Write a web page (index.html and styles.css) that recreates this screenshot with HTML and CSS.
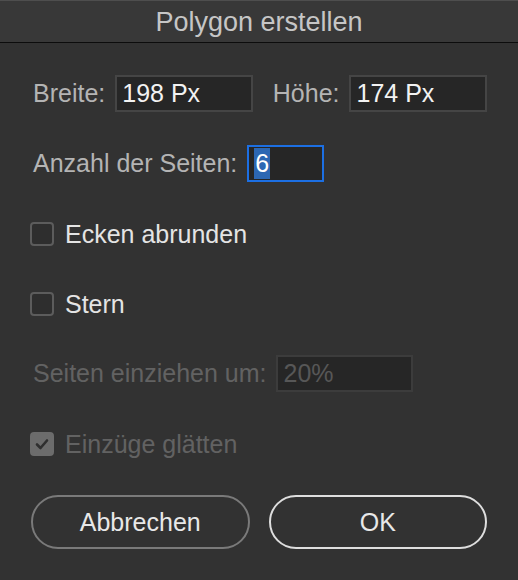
FILE: index.html
```html
<!DOCTYPE html>
<html lang="de">
<head>
    <meta charset="UTF-8">
    <meta name="viewport" content="width=device-width, initial-scale=1.0">
    <title>Polygon erstellen</title>
    <link rel="stylesheet" href="styles.css">
</head>
<body>
    <div class="dialog">
        <div class="titlebar">Polygon erstellen</div>

        <div class="content">
            <div class="row row-size">
                <label class="label">Breite:</label>
                <div class="field field-size">198 Px</div>
                <label class="label label-height">Höhe:</label>
                <div class="field field-size">174 Px</div>
            </div>

            <div class="row row-sides">
                <label class="label">Anzahl der Seiten:</label>
                <div class="field field-sides focused"><span class="selected">6</span></div>
            </div>

            <div class="check-row row-round">
                <span class="checkbox"></span>
                <span class="check-label">Ecken abrunden</span>
            </div>

            <div class="check-row row-star">
                <span class="checkbox"></span>
                <span class="check-label">Stern</span>
            </div>

            <div class="row row-indent disabled">
                <label class="label">Seiten einziehen um:</label>
                <div class="field field-indent">20%</div>
            </div>

            <div class="check-row row-smooth disabled">
                <span class="checkbox checked">
                    <svg width="16" height="16" viewBox="0 0 16 16">
                        <polyline points="3,8.5 6.5,12 13,4.5" fill="none" stroke="#2f2f2f" stroke-width="2.6" stroke-linecap="round" stroke-linejoin="round"/>
                    </svg>
                </span>
                <span class="check-label">Einzüge glätten</span>
            </div>

            <div class="buttons">
                <button class="btn btn-cancel">Abbrechen</button>
                <button class="btn btn-ok">OK</button>
            </div>
        </div>
    </div>
</body>
</html>
```

FILE: styles.css
```css
body {
    margin: 0;
    background-color: #323232;
    font-family: "Liberation Sans", Arial, sans-serif;
    overflow: hidden;
}
.dialog {
    width: 518px;
    height: 580px;
    background-color: #323232;
}
.titlebar {
    height: 43px;
    box-sizing: border-box;
    padding-top: 1px;
    line-height: 40px;
    text-align: center;
    font-size: 27px;
    color: #c6c6c6;
    background-color: #383838;
    border-top: 1px solid #4e4e4e;
    border-bottom: 1px solid #0c0c0c;
}
.content {
    padding: 0 31px 0 30px;
}
.row {
    display: flex;
    align-items: center;
    height: 37px;
}
.label {
    font-size: 25px;
    color: #b4b4b4;
    margin-left: 3px;
    margin-right: 10px;
}
.label-height {
    margin-left: 20px;
}
.field {
    height: 37px;
    box-sizing: border-box;
    background-color: #262626;
    border: 2px solid #454545;
    color: #f2f2f2;
    font-size: 25px;
    line-height: 33px;
    padding-left: 5px;
}
.field-size {
    width: 138px;
}
.field-sides {
    width: 77px;
}
.field-indent {
    width: 137px;
}
.focused {
    border-color: #1c6fe3;
}
.selected {
    display: inline-block;
    background-color: #2c67b3;
    color: #ffffff;
    line-height: 31px;
    padding: 0 1px;
}
.row-size {
    margin-top: 32px;
}
.row-sides {
    margin-top: 33px;
}
.check-row {
    display: flex;
    align-items: center;
    height: 24px;
}
.checkbox {
    width: 24px;
    height: 24px;
    box-sizing: border-box;
    border: 2px solid #5c5c5c;
    border-radius: 4px;
    background-color: #2e2e2e;
    display: flex;
    align-items: center;
    justify-content: center;
}
.checkbox.checked {
    background-color: #6c6c6c;
    border-color: #6c6c6c;
}
.check-label {
    font-size: 25px;
    color: #e4e4e4;
    margin-left: 11px;
}
.row-round {
    margin-top: 40px;
}
.row-star {
    margin-top: 46px;
}
.row-indent {
    margin-top: 39px;
}
.row-smooth {
    margin-top: 40px;
}
.disabled .label,
.disabled .check-label {
    color: #626262;
}
.disabled .field {
    color: #575757;
    border-color: #3c3c3c;
}
.buttons {
    display: flex;
    gap: 19px;
    margin-top: 39px;
    padding-left: 1px;
}
.btn {
    width: 219px;
    height: 54px;
    border-radius: 27px;
    background-color: #323232;
    font-family: inherit;
    font-size: 25px;
    color: #e8e8e8;
}
.btn-cancel {
    border: 2px solid #7a7a7a;
}
.btn-ok {
    border: 2px solid #dedede;
}
```
